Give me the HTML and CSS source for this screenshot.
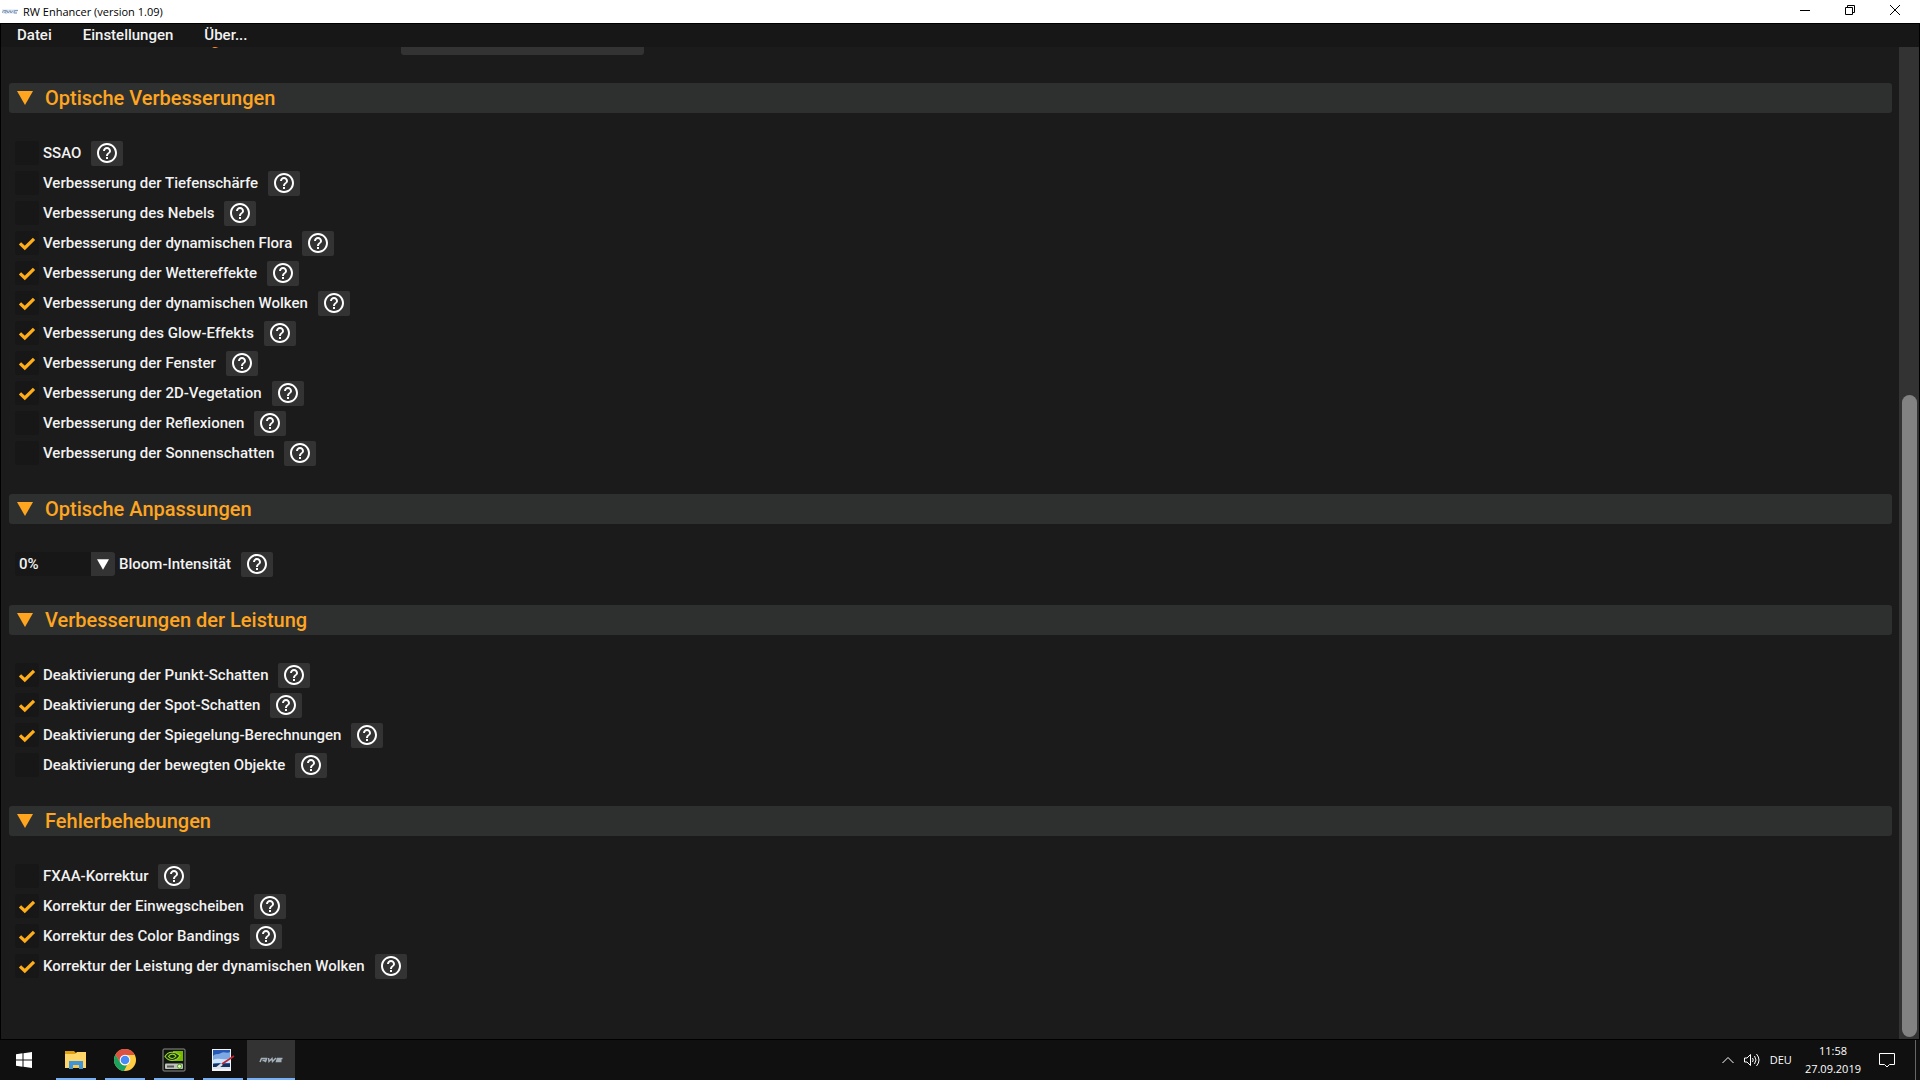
FILE: index.html
```html
<!DOCTYPE html>
<html lang="de">
<head>
    <meta charset="UTF-8">
    <meta name="viewport" content="width=device-width, initial-scale=1.0">
    <title>RW Enhancer (version 1.09)</title>
    <link rel="stylesheet" href="styles.css">
</head>
<body>
    <!-- Shared icons -->
    <svg class="icon-defs" aria-hidden="true">
        <symbol id="help" viewBox="0 0 24 24">
            <path d="M11 18h2v-2h-2v2zm1-16C6.48 2 2 6.48 2 12s4.48 10 10 10 10-4.48 10-10S17.52 2 12 2zm0 18c-4.41 0-8-3.59-8-8s3.59-8 8-8 8 3.59 8 8-3.59 8-8 8zm0-14c-2.21 0-4 1.79-4 4h2c0-1.1.9-2 2-2s2 .9 2 2c0 2-3 1.75-3 5h2c0-2.25 3-2.5 3-5 0-2.21-1.79-4-4-4z" />
        </symbol>
        <symbol id="check" viewBox="0 0 24 24">
            <path d="M5 12.300L9.800 17L19 7.800" fill="none" stroke="#ffae1a" stroke-width="3.200" />
        </symbol>
        <symbol id="triangle" viewBox="0 0 16 14">
            <path d="M0 0H16L8 14Z" />
        </symbol>
    </svg>

    <header class="titlebar">
        <svg class="app-logo" viewBox="0 0 16 16">
            <path d="M0 8.500H16M1 10.500H15" fill="none" stroke="#d3e3f5" stroke-width="2" />
            <path d="M0 11 L1.500 8.500H4.500L4 10H2.500L4 11.500M5 8.500 L6 11 L8 8.500 L9 11 L11 8.500M16 8.500H12.500L12 11H15" fill="none" stroke="#8798b0" />
        </svg>
        <h1 class="window-title">RW Enhancer (version 1.09)</h1>
        <div class="window-buttons">
            <button type="button" aria-label="Minimieren"><svg viewBox="0 0 10 10"><path d="M0 5.500H10" /></svg></button>
            <button type="button" aria-label="Verkleinern"><svg viewBox="0 0 10 10"><path d="M.5 2.500H7.500V9.500H.5ZM2.500 2.500V.5H9.500V7.500H7.500" /></svg></button>
            <button type="button" aria-label="Schließen"><svg viewBox="0 0 10 10"><path d="M0 0L10 10M10 0L0 10" /></svg></button>
        </div>
    </header>

    <div class="app">
        <nav class="menu">
            <button type="button">Datei</button>
            <button type="button">Einstellungen</button>
            <button type="button">Über...</button>
        </nav>

        <div class="view">
            <main class="content">
                <div class="promo">
                    <span class="promo-text">g</span>
                    <button class="promo-button" type="button">Entdecken Sie RW Enhancer PRO !</button>
                </div>

                <section>
                    <h2><svg><use href="#triangle" /></svg>Optische Verbesserungen</h2>
                    <ul class="options">
                        <li><label><input type="checkbox"><svg><use href="#check" /></svg>SSAO</label><button class="help" type="button" aria-label="Hilfe"><svg><use href="#help" /></svg></button></li>
                        <li><label><input type="checkbox"><svg><use href="#check" /></svg>Verbesserung der Tiefenschärfe</label><button class="help" type="button" aria-label="Hilfe"><svg><use href="#help" /></svg></button></li>
                        <li><label><input type="checkbox"><svg><use href="#check" /></svg>Verbesserung des Nebels</label><button class="help" type="button" aria-label="Hilfe"><svg><use href="#help" /></svg></button></li>
                        <li><label><input type="checkbox" checked><svg><use href="#check" /></svg>Verbesserung der dynamischen Flora</label><button class="help" type="button" aria-label="Hilfe"><svg><use href="#help" /></svg></button></li>
                        <li><label><input type="checkbox" checked><svg><use href="#check" /></svg>Verbesserung der Wettereffekte</label><button class="help" type="button" aria-label="Hilfe"><svg><use href="#help" /></svg></button></li>
                        <li><label><input type="checkbox" checked><svg><use href="#check" /></svg>Verbesserung der dynamischen Wolken</label><button class="help" type="button" aria-label="Hilfe"><svg><use href="#help" /></svg></button></li>
                        <li><label><input type="checkbox" checked><svg><use href="#check" /></svg>Verbesserung des Glow-Effekts</label><button class="help" type="button" aria-label="Hilfe"><svg><use href="#help" /></svg></button></li>
                        <li><label><input type="checkbox" checked><svg><use href="#check" /></svg>Verbesserung der Fenster</label><button class="help" type="button" aria-label="Hilfe"><svg><use href="#help" /></svg></button></li>
                        <li><label><input type="checkbox" checked><svg><use href="#check" /></svg>Verbesserung der 2D-Vegetation</label><button class="help" type="button" aria-label="Hilfe"><svg><use href="#help" /></svg></button></li>
                        <li><label><input type="checkbox"><svg><use href="#check" /></svg>Verbesserung der Reflexionen</label><button class="help" type="button" aria-label="Hilfe"><svg><use href="#help" /></svg></button></li>
                        <li><label><input type="checkbox"><svg><use href="#check" /></svg>Verbesserung der Sonnenschatten</label><button class="help" type="button" aria-label="Hilfe"><svg><use href="#help" /></svg></button></li>
                    </ul>
                </section>

                <section>
                    <h2><svg><use href="#triangle" /></svg>Optische Anpassungen</h2>
                    <ul class="options">
                        <li>
                            <div class="field">
                                <div class="select">
                                    <select id="bloom"><option>0%</option></select>
                                    <span class="select-arrow"><svg><use href="#triangle" /></svg></span>
                                </div>
                                <label for="bloom">Bloom-Intensität</label>
                            </div>
                            <button class="help" type="button" aria-label="Hilfe"><svg><use href="#help" /></svg></button>
                        </li>
                    </ul>
                </section>

                <section>
                    <h2><svg><use href="#triangle" /></svg>Verbesserungen der Leistung</h2>
                    <ul class="options">
                        <li><label><input type="checkbox" checked><svg><use href="#check" /></svg>Deaktivierung der Punkt-Schatten</label><button class="help" type="button" aria-label="Hilfe"><svg><use href="#help" /></svg></button></li>
                        <li><label><input type="checkbox" checked><svg><use href="#check" /></svg>Deaktivierung der Spot-Schatten</label><button class="help" type="button" aria-label="Hilfe"><svg><use href="#help" /></svg></button></li>
                        <li><label><input type="checkbox" checked><svg><use href="#check" /></svg>Deaktivierung der Spiegelung-Berechnungen</label><button class="help" type="button" aria-label="Hilfe"><svg><use href="#help" /></svg></button></li>
                        <li><label><input type="checkbox"><svg><use href="#check" /></svg>Deaktivierung der bewegten Objekte</label><button class="help" type="button" aria-label="Hilfe"><svg><use href="#help" /></svg></button></li>
                    </ul>
                </section>

                <section>
                    <h2><svg><use href="#triangle" /></svg>Fehlerbehebungen</h2>
                    <ul class="options">
                        <li><label><input type="checkbox"><svg><use href="#check" /></svg>FXAA-Korrektur</label><button class="help" type="button" aria-label="Hilfe"><svg><use href="#help" /></svg></button></li>
                        <li><label><input type="checkbox" checked><svg><use href="#check" /></svg>Korrektur der Einwegscheiben</label><button class="help" type="button" aria-label="Hilfe"><svg><use href="#help" /></svg></button></li>
                        <li><label><input type="checkbox" checked><svg><use href="#check" /></svg>Korrektur des Color Bandings</label><button class="help" type="button" aria-label="Hilfe"><svg><use href="#help" /></svg></button></li>
                        <li><label><input type="checkbox" checked><svg><use href="#check" /></svg>Korrektur der Leistung der dynamischen Wolken</label><button class="help" type="button" aria-label="Hilfe"><svg><use href="#help" /></svg></button></li>
                    </ul>
                </section>
            </main>
            <div class="scrollbar"><div class="thumb"></div></div>
        </div>
    </div>

    <footer class="taskbar">
        <button class="start" type="button" aria-label="Start">
            <svg viewBox="0 0 16 16"><path fill="#fff" d="M0 2.200L6.500 1.300V7.500H0ZM7.500 1.200L16 0V7.500H7.500ZM0 8.500H6.500V14.700L0 13.800ZM7.500 8.500H16V16L7.500 14.800Z" /></svg>
        </button>
        <button class="task" type="button" aria-label="Explorer">
            <svg viewBox="0 0 24 24">
                <path fill="#e0a010" d="M1 3H10L12 5V8H1Z" />
                <path fill="#ffd667" d="M1 6H11L13 4H22V20H1Z" />
                <path fill="#3d96dc" d="M5 13H19V21H15V17H9V21H5Z" />
                <path fill="#fbc94b" d="M9 17H15V20H9Z" />
            </svg>
        </button>
        <button class="task" type="button" aria-label="Chrome">
            <svg viewBox="0 0 24 24">
                <circle cx="12" cy="12" r="11" fill="#ffcd42" />
                <path fill="#dd5144" d="M2.500 6.500A11 11 0 0 1 21.700 7H12L7.200 14.700Z" />
                <path fill="#1aa261" d="M2.500 6.500L7.200 14.700A5.500 5.500 0 0 0 14 17L11 23A11 11 0 0 1 2.500 6.500Z" />
                <circle cx="12" cy="12" r="5.300" fill="#fff" />
                <circle cx="12" cy="12" r="4.300" fill="#4a8af4" />
            </svg>
        </button>
        <button class="task" type="button" aria-label="NVIDIA Inspector">
            <svg viewBox="0 0 24 24">
                <rect x="1" y="1" width="22" height="22" rx="1" fill="#10150d" stroke="#8f8f8f" />
                <path fill="#76b900" d="M11 3H21V13H11Z" />
                <path d="M3 8.500C6 3 13 3 18 7.500C14 14 7 14 3 8.500ZM6.500 8.500C8.500 5.500 12 5.500 14 8C12 11.500 8.500 11 6.500 8.500Z" fill="#16300a" stroke="#9bd82f" stroke-width="1.200" />
                <rect x="3" y="15.500" width="18" height="5.500" rx="1" fill="#bfc3bb" />
                <path d="M5 18.500H12" stroke="#555" stroke-width="2" />
                <circle cx="17.500" cy="18.300" r="2" fill="#dfffc0" stroke="#4a9b14" />
            </svg>
        </button>
        <button class="task" type="button" aria-label="Bildbearbeitung">
            <svg viewBox="0 0 24 24">
                <rect x="1" y="1" width="19" height="22" fill="#f2f4f8" />
                <rect x="2" y="2" width="17" height="19" fill="#2458b4" />
                <path d="M2 8C5 5 7 7 10 5C13 3 16 6 19 4V14C12 16 6 14 2 16Z" fill="#7ea8e4" />
                <path d="M2 12C8 9 13 13 19 10V15H2Z" fill="#cfe2f7" />
                <path d="M2 16H19V19H2Z" fill="#17315f" />
                <path d="M2 19H19V21H2Z" fill="#dfe5ee" />
                <path d="M23 8L11 16" stroke="#c1272d" stroke-width="1.600" />
                <path d="M11 16L6 20" stroke="#dce2e8" stroke-width="2.500" />
            </svg>
        </button>
        <button class="task active" type="button" aria-label="RW Enhancer">
            <svg viewBox="0 0 24 24">
                <path d="M1 14L2.500 10.500H7.500L7 12.500H3.500M5 12.500L7 14M9.500 10L10 13.500L13 10.500L13.500 13.500L17 10M23.500 10.500H18.500L17.500 13.500H22.500M18 12H22.500" fill="none" stroke="#a3afb9" stroke-width="1.500" />
            </svg>
        </button>

        <div class="tray">
            <svg class="chevron" viewBox="0 0 12 12"><path d="M.5 9L6 3.500L11.500 9" /></svg>
            <svg class="speaker" viewBox="0 0 16 16"><path d="M.5 6H3L6.500 2.500V13.500L3 10H.5ZM8.500 6Q10 8 8.500 10M10.500 4Q13.500 8 10.500 12M12.500 2Q17.500 8 12.500 14" /></svg>
            <span>DEU</span>
            <time class="clock" datetime="2019-09-27T11:58"><span>11:58</span><span>27.09.2019</span></time>
            <svg class="notes" viewBox="0 0 16 16"><path d="M.5 1.500H15.500V12.500H10.500L8 15L5.500 12.500H.5Z" /></svg>
        </div>
    </footer>
</body>
</html>
```
FILE: styles.css
```css
* {
    box-sizing: border-box;
}

body {
    margin: 0;
    height: 100vh;
    display: flex;
    flex-direction: column;
    overflow: hidden;
    background: #000;
    color: #f2f2f2;
    font: 500 15px/25px Roboto, sans-serif;
}

button {
    margin: 0;
    padding: 0;
    border: 0;
    background: none;
    color: inherit;
    font: inherit;
}

.icon-defs {
    display: none;
}

/* Window title bar */
.titlebar {
    height: 23px;
    flex: none;
    display: flex;
    background: #fff;
    color: #000;
}

.app-logo {
    width: 16px;
    height: 16px;
    margin: 2px 5px 0 2px;
}

.window-title {
    flex: 1;
    margin: 0;
    font: 400 11px/23px "Open Sans", sans-serif;
}

.window-buttons {
    display: flex;
    padding-right: 3px;
}

.window-buttons button {
    width: 45px;
    height: 20px;
    display: grid;
    place-items: center;
}

.window-buttons svg {
    width: 10px;
    height: 10px;
    fill: none;
    stroke: #000;
}

/* Application area */
.app {
    flex: 1;
    min-height: 0;
    display: flex;
    flex-direction: column;
    border: 1px solid #000;
    background: #1b1b1b;
}

.menu {
    height: 23px;
    flex: none;
    display: flex;
    align-items: center;
    gap: 31px;
    padding-left: 16px;
    background: #171717;
}

.view {
    flex: 1;
    min-height: 0;
    display: flex;
    overflow: hidden;
}

.content {
    flex: 1;
    padding: 0 7px 0 8px;
    margin-top: -17px;
}

.promo {
    height: 25px;
    display: flex;
    margin-bottom: 28px;
}

.promo-text {
    width: 392px;
    padding-left: 202px;
    color: #ff8c1a;
    line-height: 20px;
}

.promo-button {
    padding: 0 7px;
    border-radius: 3px;
    background: #333;
}

section {
    margin-bottom: 28px;
}

h2 {
    height: 30px;
    margin: 0;
    padding-left: 8px;
    display: flex;
    align-items: center;
    gap: 12px;
    border-radius: 3px;
    background: #2e302f;
    color: #ffa51f;
    font: 500 20px/32px Roboto, sans-serif;
}

h2 svg {
    width: 16px;
    height: 14px;
    fill: #ffa51f;
}

.options {
    display: flex;
    flex-direction: column;
    gap: 5px;
    margin: 0;
    padding: 28px 0 0 6px;
    list-style: none;
}

.options li {
    display: flex;
    gap: 10px;
}

/* The tick is drawn by the svg that follows the input */
.options label {
    display: flex;
}

input[type="checkbox"] {
    appearance: none;
    width: 24px;
    height: 24px;
    margin: 0 4px 0 0;
    border-radius: 3px;
    background: #171717;
}

input + svg {
    width: 24px;
    height: 24px;
    margin: 0 4px 0 -28px;
    visibility: hidden;
}

input:checked + svg {
    visibility: visible;
}

.help {
    width: 32px;
    height: 25px;
    display: grid;
    justify-items: center;
    align-items: start;
    border-radius: 2px;
    background: #333;
}

.help svg {
    width: 24px;
    height: 24px;
    fill: #fff;
}

.field {
    display: flex;
    gap: 4px;
}

.select {
    display: flex;
    height: 24px;
}

select {
    appearance: none;
    width: 76px;
    padding: 0 4px;
    border: 0;
    border-radius: 3px 0 0 3px;
    background: #171717;
    color: inherit;
    font: inherit;
}

.select-arrow {
    width: 24px;
    display: grid;
    place-items: center;
    border-radius: 0 3px 3px 0;
    background: #333;
}

.select-arrow svg {
    width: 12px;
    height: 11px;
    fill: #fff;
}

.scrollbar {
    width: 20px;
    display: flex;
    flex-direction: column;
    justify-content: flex-end;
    padding: 3px 2px 2px 3px;
    background: #333;
}

.thumb {
    height: 65%;
    border-radius: 8px;
    background: #828282;
}

/* Taskbar */
.taskbar {
    height: 40px;
    flex: none;
    display: flex;
    background: #101010;
    font: 400 11px/18px "Open Sans", sans-serif;
    color: #fff;
}

.start {
    width: 48px;
    margin-right: 3px;
    display: grid;
    place-items: center;
}

.start svg {
    width: 16px;
    height: 16px;
}

.task {
    width: 49px;
    display: grid;
    place-items: center;
    background: linear-gradient(#76b0f8, #76b0f8) bottom center / 40px 2px no-repeat;
}

.task svg {
    width: 24px;
    height: 24px;
}

.task.active {
    width: 48px;
    background: linear-gradient(#76b0f8, #76b0f8) bottom / 100% 2px no-repeat #333;
}

.tray {
    display: flex;
    align-items: center;
    gap: 10px;
    margin: 0 4px 0 auto;
    padding-right: 20px;
    border-right: 1px solid #666;
}

.tray svg {
    fill: none;
    stroke: #fff;
}

.chevron {
    width: 12px;
    height: 12px;
}

.speaker,
.notes {
    width: 16px;
    height: 16px;
}

.clock {
    display: flex;
    flex-direction: column;
    align-items: center;
    margin: 0 8px 0 3px;
}
```
